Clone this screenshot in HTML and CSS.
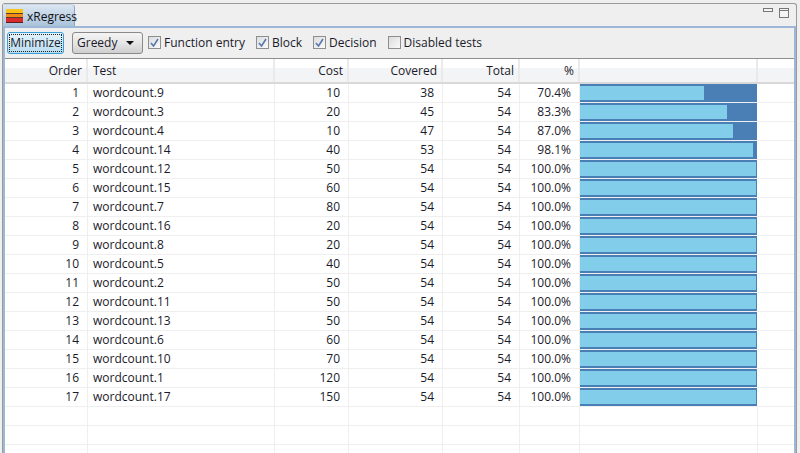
FILE: index.html
```html
<!DOCTYPE html>
<html lang="en">
<head>
<meta charset="utf-8">
<title>xRegress</title>
<link rel="stylesheet" href="styles.css">
</head>
<body>
<div class="view">
  <div class="tabbar">
    <div class="tab">
      <svg class="tab-icon" width="17" height="15" viewBox="0 0 17 15"><rect width="17" height="4" y="0" fill="#fcc419"/><rect width="17" height="1" y="4" fill="#5a3a20"/><rect width="17" height="3" y="5" fill="#f08c1a"/><rect width="17" height="1" y="8" fill="#5a3a20"/><rect width="17" height="4" y="9" fill="#d92b2b"/><rect width="17" height="1" y="13" fill="#5a2020"/></svg>
      <span>xRegress</span>
    </div>
    <div class="win-controls">
      <svg width="10" height="5" viewBox="0 0 10 5"><rect x="0.5" y="0.5" width="9" height="3" fill="#f4f4f4" stroke="#777"/></svg>
      <svg width="10" height="10" viewBox="0 0 10 10"><rect x="0.5" y="0.5" width="9" height="9" fill="#f4f4f4" stroke="#777"/><rect x="0" y="2" width="10" height="1" fill="#777"/></svg>
    </div>
  </div>
  <div class="frame">
    <div class="toolbar">
      <button class="btn"><span class="btn-focus">Minimize</span></button>
      <div class="combo"><span>Greedy</span><i class="arrow"></i></div>
      <label class="check c1"><i class="box on"><svg width="9" height="9" viewBox="0 0 9 9"><path d="M1 5l2.5 3L8 1" fill="none" stroke="#5a78b0" stroke-width="1.6"/></svg></i>Function entry</label>
      <label class="check c2"><i class="box on"><svg width="9" height="9" viewBox="0 0 9 9"><path d="M1 5l2.5 3L8 1" fill="none" stroke="#5a78b0" stroke-width="1.6"/></svg></i>Block</label>
      <label class="check c3"><i class="box on"><svg width="9" height="9" viewBox="0 0 9 9"><path d="M1 5l2.5 3L8 1" fill="none" stroke="#5a78b0" stroke-width="1.6"/></svg></i>Decision</label>
      <label class="check"><i class="box"></i>Disabled tests</label>
    </div>
    <div class="table">
      <div class="row head"><div class="r">Order</div><div class="l">Test</div><div class="r">Cost</div><div class="r">Covered</div><div class="r">Total</div><div class="r">%</div><div></div><div></div></div>
      <div class="row"><div class="r">1</div><div class="l">wordcount.9</div><div class="r">10</div><div class="r">38</div><div class="r">54</div><div class="r">70.4%</div><div class="bar"><i style="width:70.4%"></i></div><div></div></div>
      <div class="row"><div class="r">2</div><div class="l">wordcount.3</div><div class="r">20</div><div class="r">45</div><div class="r">54</div><div class="r">83.3%</div><div class="bar"><i style="width:83.3%"></i></div><div></div></div>
      <div class="row"><div class="r">3</div><div class="l">wordcount.4</div><div class="r">10</div><div class="r">47</div><div class="r">54</div><div class="r">87.0%</div><div class="bar"><i style="width:87%"></i></div><div></div></div>
      <div class="row"><div class="r">4</div><div class="l">wordcount.14</div><div class="r">40</div><div class="r">53</div><div class="r">54</div><div class="r">98.1%</div><div class="bar"><i style="width:98.1%"></i></div><div></div></div>
      <div class="row"><div class="r">5</div><div class="l">wordcount.12</div><div class="r">50</div><div class="r">54</div><div class="r">54</div><div class="r">100.0%</div><div class="bar"><i style="width:100%"></i></div><div></div></div>
      <div class="row"><div class="r">6</div><div class="l">wordcount.15</div><div class="r">60</div><div class="r">54</div><div class="r">54</div><div class="r">100.0%</div><div class="bar"><i style="width:100%"></i></div><div></div></div>
      <div class="row"><div class="r">7</div><div class="l">wordcount.7</div><div class="r">80</div><div class="r">54</div><div class="r">54</div><div class="r">100.0%</div><div class="bar"><i style="width:100%"></i></div><div></div></div>
      <div class="row"><div class="r">8</div><div class="l">wordcount.16</div><div class="r">20</div><div class="r">54</div><div class="r">54</div><div class="r">100.0%</div><div class="bar"><i style="width:100%"></i></div><div></div></div>
      <div class="row"><div class="r">9</div><div class="l">wordcount.8</div><div class="r">20</div><div class="r">54</div><div class="r">54</div><div class="r">100.0%</div><div class="bar"><i style="width:100%"></i></div><div></div></div>
      <div class="row"><div class="r">10</div><div class="l">wordcount.5</div><div class="r">40</div><div class="r">54</div><div class="r">54</div><div class="r">100.0%</div><div class="bar"><i style="width:100%"></i></div><div></div></div>
      <div class="row"><div class="r">11</div><div class="l">wordcount.2</div><div class="r">50</div><div class="r">54</div><div class="r">54</div><div class="r">100.0%</div><div class="bar"><i style="width:100%"></i></div><div></div></div>
      <div class="row"><div class="r">12</div><div class="l">wordcount.11</div><div class="r">50</div><div class="r">54</div><div class="r">54</div><div class="r">100.0%</div><div class="bar"><i style="width:100%"></i></div><div></div></div>
      <div class="row"><div class="r">13</div><div class="l">wordcount.13</div><div class="r">50</div><div class="r">54</div><div class="r">54</div><div class="r">100.0%</div><div class="bar"><i style="width:100%"></i></div><div></div></div>
      <div class="row"><div class="r">14</div><div class="l">wordcount.6</div><div class="r">60</div><div class="r">54</div><div class="r">54</div><div class="r">100.0%</div><div class="bar"><i style="width:100%"></i></div><div></div></div>
      <div class="row"><div class="r">15</div><div class="l">wordcount.10</div><div class="r">70</div><div class="r">54</div><div class="r">54</div><div class="r">100.0%</div><div class="bar"><i style="width:100%"></i></div><div></div></div>
      <div class="row"><div class="r">16</div><div class="l">wordcount.1</div><div class="r">120</div><div class="r">54</div><div class="r">54</div><div class="r">100.0%</div><div class="bar"><i style="width:100%"></i></div><div></div></div>
      <div class="row"><div class="r">17</div><div class="l">wordcount.17</div><div class="r">150</div><div class="r">54</div><div class="r">54</div><div class="r">100.0%</div><div class="bar"><i style="width:100%"></i></div><div></div></div>
      <div class="row"><div></div><div></div><div></div><div></div><div></div><div></div><div></div><div></div></div>
      <div class="row"><div></div><div></div><div></div><div></div><div></div><div></div><div></div><div></div></div>
      <div class="row tail"><div></div><div></div><div></div><div></div><div></div><div></div><div></div><div></div></div>
    </div>
  </div>
</div>
<div class="ticks"><i></i><i></i><i></i></div>
</body>
</html>
```
FILE: styles.css
```css
* { box-sizing: border-box; }
html, body { margin: 0; height: 100%; }
body {
  background: #efefef;
  color: #1a1a2a;
  font: 12px/16px "Open Sans", "Noto Sans", sans-serif;
  overflow: hidden;
  padding: 3px 3px 0 2px;
}
.view {
  border: 1px solid #9a9a9a;
  border-width: 1px 1px 0 1px;
  border-radius: 3px 3px 0 0;
}
.tabbar {
  display: flex;
  justify-content: space-between;
  height: 22px;
}
.tab {
  display: flex;
  align-items: center;
  gap: 4px;
  width: 72px;
  padding: 2px 0 0 3px;
  background: linear-gradient(#dbe6f1, #a9c3dc);
  border-right: 1px solid #8fa8c2;
  border-radius: 0 4px 0 0;
  border-top: 1px solid #c9d6e4;
  color: #111;
}
.tab-icon { flex: none; }
.win-controls {
  display: flex;
  align-items: flex-start;
  gap: 6px;
  padding: 4px 7px 0 0;
}
.frame {
  border: 2px solid #9db8d6;
  border-top-width: 2px;
  border-bottom: 3px solid #9db8d6;
  outline: 0;
}
.toolbar {
  display: flex;
  align-items: center;
  height: 31px;
  padding: 0 0 1px 2px;
  border-bottom: 1px solid #8f8f8f;
}
.btn {
  width: 57px;
  height: 22px;
  padding: 1px;
  border: 1px solid #3a9fd8;
  border-radius: 3px;
  background: linear-gradient(#e4f3fb, #b9ddf0);
  font: inherit;
  color: #1a1a2a;
  margin-right: 8px;
  box-shadow: 0 0 0 0 #000;
}
.btn-focus {
  display: block;
  height: 18px;
  line-height: 16px;
  border: 1px dotted #222;
}
.combo {
  display: flex;
  align-items: center;
  justify-content: space-between;
  width: 71px;
  height: 22px;
  padding: 0 5px 0 4px;
  border: 1px solid #8a8a8a;
  border-radius: 3px;
  background: linear-gradient(#f4f4f4 0%, #e6e6e6 50%, #cfcfcf 100%);
  margin-right: 5px;
}
.arrow {
  width: 0;
  height: 0;
  border: 4px solid transparent;
  border-top-color: #111;
  border-bottom: 0;
  margin-right: 3px;
}
.check {
  display: flex;
  align-items: center;
  gap: 3px;
  margin-right: 11px;
}
.box {
  display: flex;
  align-items: center;
  justify-content: center;
  width: 13px;
  height: 13px;
  border: 1px solid #8e8f8f;
  background: linear-gradient(135deg, #dcdcdc, #fafafa);
}
.table {
  background: #fff;
  border-bottom: 1px solid #8f9aa5;
}
.row {
  display: grid;
  grid-template-columns: 82px 187px 74px 94px 77px 60px 178px 1fr;
  height: 19px;
  border-bottom: 1px solid #efefef;
  padding-left: 1px;
}
.row > div {
  border-right: 1px solid #efefef;
  line-height: 18px;
  overflow: hidden;
  white-space: nowrap;
}
.row > div:last-child { border-right: 0; }
.r { text-align: right; padding-right: 8px; }
.l { padding-left: 5px; }
.head {
  height: 25px;
  border-bottom: 2px solid #d8d8d8;
  background: linear-gradient(#fff 0, #fff 40%, #f3f4f6 41%, #f3f4f6 100%);
}
.head > div { border-right: 2px solid #eaeaea; line-height: 24px; }
.head .r { padding-right: 4px; }
.head .l { padding-left: 5px; }
.tail { height: 17px; border-bottom: 0; }
.row > .bar {
  background: #4a7fb5;
  padding: 2px 1px 2px 0;
  border-right: 0;
  width: 177px;
}
.bar i { display: block; height: 14px; background: #82cde9; }
.ticks {
  display: flex;
  height: 5px;
  padding-left: 181px;
  gap: 135px;
}
.ticks i { width: 1px; height: 4px; background: #8a8a8a; }
.ticks i:nth-child(2) { margin-right: 58px; }
```
